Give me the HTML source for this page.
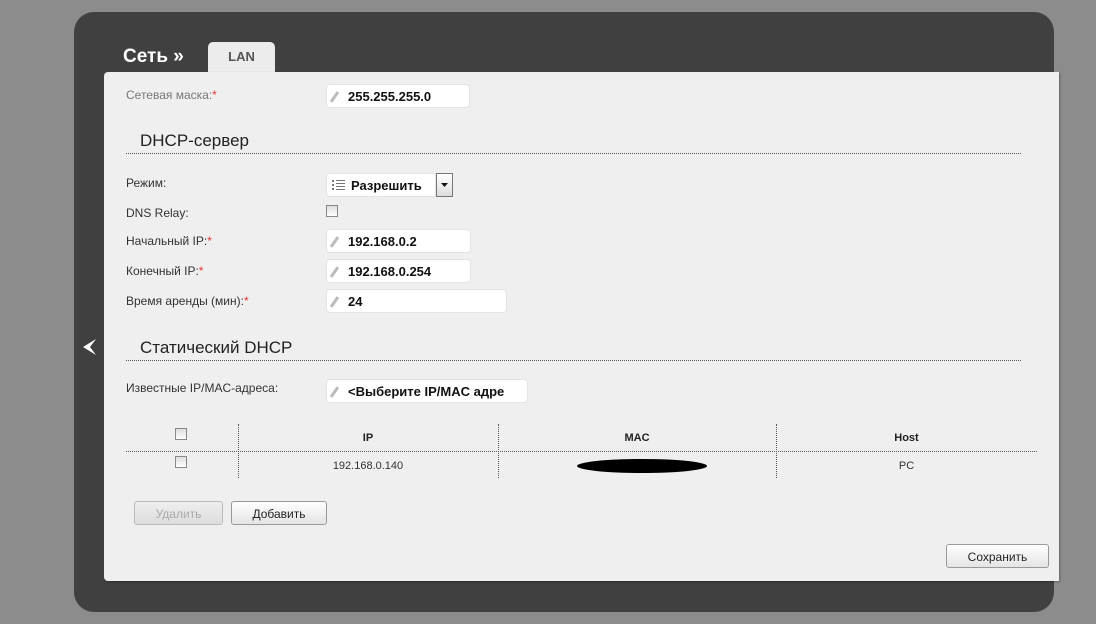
<!DOCTYPE html>
<html><head><meta charset="utf-8"><style>
*{margin:0;padding:0;box-sizing:border-box}
body{width:1096px;height:624px;background:#8c8c8c;position:relative;overflow:hidden;font-family:"Liberation Sans",sans-serif;font-size:12px;color:#333}
.dark{position:absolute;left:74px;top:12px;width:980px;height:600px;background:#404040;border-radius:20px}
.title{position:absolute;left:123px;top:46px;color:#fff;font-weight:bold;font-size:19px}
.tab{position:absolute;left:208px;top:42px;width:67px;height:32px;background:#ececec;border-radius:5px 5px 0 0;text-align:center;font-weight:bold;font-size:13px;color:#555;padding-top:7px}
.panel{position:absolute;left:104px;top:72px;width:955px;height:509px;background:#efefef;border-radius:4px 0 0 4px;box-shadow:1px 1px 2px rgba(0,0,0,.3)}
.a{position:absolute}
.lbl{position:absolute;left:126px;font-size:12px;color:#333}
.star{color:#e33;vertical-align:top;font-size:12px}
.inp{position:absolute;left:326px;height:24px;background:#fff;border-radius:4px;border:1px solid #e4e4e4;font-weight:bold;font-size:13px;color:#111;padding:4px 0 0 21px}
.pen{position:absolute;left:6px;top:6px;width:3px;height:12px;background:#bbb;transform:rotate(35deg)}
.h{position:absolute;left:140px;font-size:17px;color:#222}
.hr{position:absolute;left:126px;width:895px;border-top:1px dotted #555}
.cb{position:absolute;width:12px;height:12px;border:1px solid #888;background:linear-gradient(#ddd,#fff)}
.vl{position:absolute;top:424px;height:54px;border-left:1px dotted #555}
.th{position:absolute;top:432px;font-weight:bold;font-size:11px;color:#222;text-align:center}
.td{position:absolute;top:460px;font-size:11px;color:#333;text-align:center}
.btn{position:absolute;height:24px;border:1px solid #999;border-radius:3px;background:linear-gradient(#fff,#e4e4e4);text-align:center;font-size:12px;padding-top:5px;color:#222}
</style></head><body>
<div class="dark"></div>
<div class="title">Сеть »</div>
<div class="tab">LAN</div>
<svg class="a" style="left:82px;top:338px" width="16" height="18"><path d="M14 1 L1 9 L14 17 L8 9 Z" fill="#fff"/></svg>
<div class="panel"></div>
<div class="lbl" style="top:88px;color:#777">Сетевая маска:<span class="star">*</span></div>
<div class="inp" style="top:84px;width:144px"><span class="pen"></span>255.255.255.0</div>
<div class="h" style="top:131px">DHCP-сервер</div>
<div class="hr" style="top:153px"></div>
<div class="lbl" style="top:176px">Режим:</div>
<div class="inp" style="top:173px;width:110px;border-radius:4px 0 0 4px;padding-left:24px">
<svg class="a" style="left:5px;top:6px" width="14" height="12"><g fill="#777"><rect x="0" y="0" width="2" height="2"/><rect x="0" y="4" width="2" height="2"/><rect x="0" y="8" width="2" height="2"/><rect x="4" y="0" width="9" height="1"/><rect x="4" y="3" width="9" height="1"/><rect x="4" y="6" width="9" height="1"/><rect x="4" y="9" width="9" height="1"/></g></svg>Разрешить</div>
<div class="a" style="left:436px;top:173px;width:17px;height:24px;border:1px solid #777;background:linear-gradient(#fff,#ddd)"><svg class="a" style="left:4px;top:9px" width="8" height="5"><path d="M0 0H7L3.5 4Z" fill="#111"/></svg></div>
<div class="lbl" style="top:206px">DNS Relay:</div>
<div class="cb" style="left:326px;top:205px"></div>
<div class="lbl" style="top:234px">Начальный IP:<span class="star">*</span></div>
<div class="inp" style="top:229px;width:145px"><span class="pen"></span>192.168.0.2</div>
<div class="lbl" style="top:264px">Конечный IP:<span class="star">*</span></div>
<div class="inp" style="top:259px;width:145px"><span class="pen"></span>192.168.0.254</div>
<div class="lbl" style="top:294px">Время аренды (мин):<span class="star">*</span></div>
<div class="inp" style="top:289px;width:181px"><span class="pen"></span>24</div>
<div class="h" style="top:338px">Статический DHCP</div>
<div class="hr" style="top:360px"></div>
<div class="lbl" style="top:381px">Известные IP/MAC-адреса:</div>
<div class="inp" style="top:379px;width:202px;overflow:hidden;white-space:nowrap"><span class="pen"></span>&lt;Выберите IP/MAC адре</div>
<div class="cb" style="left:175px;top:428px"></div>
<div class="cb" style="left:175px;top:456px"></div>
<div class="vl" style="left:238px"></div>
<div class="vl" style="left:498px"></div>
<div class="vl" style="left:776px"></div>
<div class="a" style="left:126px;top:451px;width:911px;border-top:1px dotted #555"></div>
<div class="th" style="left:238px;width:260px">IP</div>
<div class="th" style="left:498px;width:278px">MAC</div>
<div class="th" style="left:776px;width:261px">Host</div>
<div class="td" style="left:238px;width:260px">192.168.0.140</div>
<div class="a" style="left:577px;top:459px;width:130px;height:14px;background:#000;border-radius:50%"></div>
<div class="td" style="left:776px;width:261px">PC</div>
<div class="btn" style="left:134px;top:501px;width:89px;color:#aaa;background:linear-gradient(#eee,#ddd);border-color:#bbb">Удалить</div>
<div class="btn" style="left:231px;top:501px;width:96px">Добавить</div>
<div class="btn" style="left:946px;top:544px;width:103px">Сохранить</div>
</body></html>
